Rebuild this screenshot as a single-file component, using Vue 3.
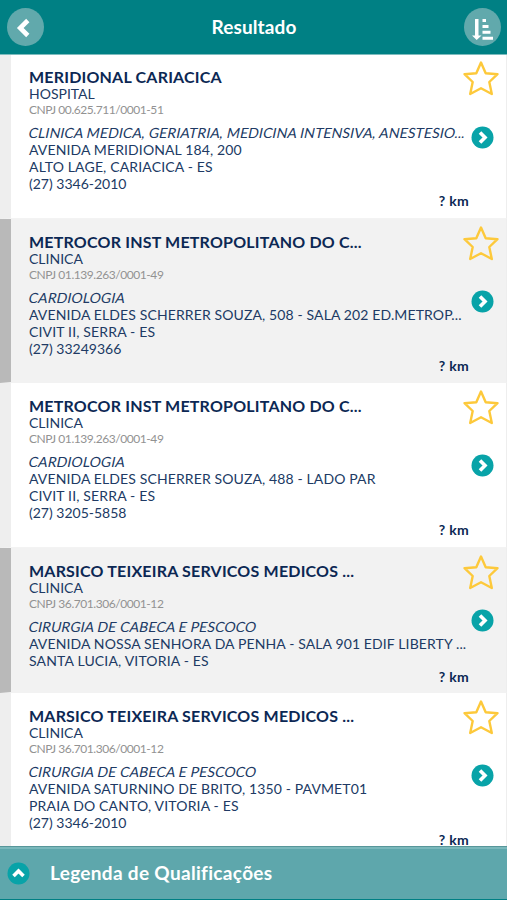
<script setup>
import { ref } from "vue";

// Prestadores encontrados na busca
const results = ref([
  {
    id: 1,
    name: "MERIDIONAL CARIACICA",
    type: "HOSPITAL",
    cnpj: "00.625.711/0001-51",
    specialty: "CLINICA MEDICA, GERIATRIA, MEDICINA INTENSIVA, ANESTESIO...",
    address: "AVENIDA MERIDIONAL 184, 200",
    city: "ALTO LAGE, CARIACICA - ES",
    phone: "(27) 3346-2010",
  },
  {
    id: 2,
    name: "METROCOR INST METROPOLITANO DO C...",
    type: "CLINICA",
    cnpj: "01.139.263/0001-49",
    specialty: "CARDIOLOGIA",
    address: "AVENIDA ELDES SCHERRER SOUZA, 508 - SALA 202 ED.METROP...",
    city: "CIVIT II, SERRA - ES",
    phone: "(27) 33249366",
  },
  {
    id: 3,
    name: "METROCOR INST METROPOLITANO DO C...",
    type: "CLINICA",
    cnpj: "01.139.263/0001-49",
    specialty: "CARDIOLOGIA",
    address: "AVENIDA ELDES SCHERRER SOUZA, 488 - LADO PAR",
    city: "CIVIT II, SERRA - ES",
    phone: "(27) 3205-5858",
  },
  {
    id: 4,
    name: "MARSICO TEIXEIRA SERVICOS MEDICOS ...",
    type: "CLINICA",
    cnpj: "36.701.306/0001-12",
    specialty: "CIRURGIA DE CABECA E PESCOCO",
    address: "AVENIDA NOSSA SENHORA DA PENHA - SALA 901 EDIF LIBERTY ...",
    city: "SANTA LUCIA, VITORIA - ES",
    phone: "",
  },
  {
    id: 5,
    name: "MARSICO TEIXEIRA SERVICOS MEDICOS ...",
    type: "CLINICA",
    cnpj: "36.701.306/0001-12",
    specialty: "CIRURGIA DE CABECA E PESCOCO",
    address: "AVENIDA SATURNINO DE BRITO, 1350 - PAVMET01",
    city: "PRAIA DO CANTO, VITORIA - ES",
    phone: "(27) 3346-2010",
  },
]);
</script>

<template>
  <div class="screen">
    <header class="header">
      <button class="round">
        <svg width="37" height="38" viewBox="0 0 37 38">
          <path d="M20.800 12.500 L13.200 20 L20.800 27.500" fill="none" stroke="#fff" stroke-width="4.600" />
        </svg>
      </button>
      <h1>Resultado</h1>
      <button class="round">
        <svg width="37" height="38" viewBox="0 0 37 38" fill="#fff">
          <path d="M11 11h3.500v16.500h3L12.700 32 8 27.500h3z" />
          <path d="M18.500 11h3.500v3h-3.500zM18.500 17h6v3h-6zM18.500 22.800h8v3h-8zM18.500 28.800h10.500v3h-10.500z" />
        </svg>
      </button>
    </header>

    <main class="list">
      <article v-for="item in results" :key="item.id" class="card">
        <div class="info">
          <h2>{{ item.name }}</h2>
          <p>{{ item.type }}</p>
          <p class="cnpj">CNPJ {{ item.cnpj }}</p>
          <p class="specialty">{{ item.specialty }}</p>
          <p class="address">{{ item.address }}</p>
          <p class="city">{{ item.city }}</p>
          <p v-if="item.phone" class="phone">{{ item.phone }}</p>
          <p class="distance">? km</p>
        </div>
        <div class="actions">
          <svg class="star" width="38" height="36" viewBox="0 0 38 36">
            <path
              d="M19 2.500 L23.700 13.300 L35.500 14.200 L27.300 22 L29.800 34 L19 28.300 L8.200 34 L10.700 22 L2.500 14.200 L14.300 13.300 Z"
              fill="none" stroke="#fdc93b" stroke-width="2.400" stroke-linejoin="round" />
          </svg>
          <svg class="go" width="23" height="23" viewBox="0 0 23 23">
            <circle cx="11.500" cy="11.500" r="11" fill="#08a3a8" />
            <path d="M9 6.500 L14 11.500 L9 16.500" fill="none" stroke="#fff" stroke-width="3.600" />
          </svg>
        </div>
      </article>
    </main>

    <footer class="legend">
      <svg width="23" height="23" viewBox="0 0 23 23">
        <circle cx="11.500" cy="11.500" r="11" fill="#08a3a8" />
        <path d="M6.500 14 L11.500 9 L16.500 14" fill="none" stroke="#fff" stroke-width="3.600" />
      </svg>
      <span>Legenda de Qualificações</span>
    </footer>
  </div>
</template>

<style>
body {
  margin: 0;
}
</style>

<style scoped>
.screen {
  display: flex;
  flex-direction: column;
  height: 900px;
  overflow: hidden;
  background: #eee;
  font-family: Lato, "Liberation Sans", sans-serif;
  color: #203a64;
}

.header {
  display: flex;
  align-items: center;
  justify-content: space-between;
  flex: none;
  height: 55px;
  box-sizing: border-box;
  padding: 0 6px 1px 7px;
  background: #008084;
  border-bottom: 1px solid #7dbcbe;
  color: #fff;
}

.header h1 {
  margin: 0 0 1px;
  font-size: 19px;
  font-weight: 700;
  letter-spacing: 0.1px;
}

.round {
  width: 37px;
  height: 38px;
  padding: 0;
  border: none;
  border-radius: 50%;
  background: #61a9ac;
}

.round svg {
  display: block;
}

.list {
  flex: 1;
  min-height: 0;
  overflow: hidden;
}

.card {
  display: flex;
  height: 164.500px;
  box-sizing: border-box;
  border-left: 11px solid #eee;
  border-right: 1px solid #eee;
  border-bottom: 1px solid #f3f3f3;
  padding-left: 18px;
  background: #fff;
}

.card:first-child {
  margin-top: -0.700px;
}

.card:nth-child(4) {
  height: 145.600px;
}

.card:nth-child(even) {
  border-left-color: #b9b9b9;
  border-bottom-color: #f2f2f2;
  background: #f2f2f2;
}

.info {
  flex: 1;
  min-width: 0;
  display: flex;
  flex-direction: column;
  padding-top: 14px;
  white-space: nowrap;
}

.info h2 {
  margin: 0;
  font-size: 16px;
  line-height: 18px;
  font-weight: 700;
  letter-spacing: 0.200px;
  color: #0c2854;
}

.info p {
  margin: 0;
  font-size: 14px;
  line-height: 17px;
}

.info h2 + p {
  margin-top: -1px;
}

.info .cnpj {
  font-size: 12px;
  line-height: 16px;
  letter-spacing: -0.440px;
  color: #929292;
}

/* inclinado sem trocar o desenho das letras */
.info .specialty {
  margin-top: 6px;
  letter-spacing: 0.120px;
  transform: skewX(-12deg);
}

.info .address {
  letter-spacing: 0.120px;
}

.info .city {
  letter-spacing: 0.160px;
}

.info .distance {
  align-self: flex-end;
  font-weight: 700;
  letter-spacing: 0.300px;
  color: #0c2854;
}

.card:nth-child(4) .distance {
  margin-top: -1px;
}

.actions {
  display: flex;
  flex-direction: column;
  flex: none;
  width: 37px;
  position: relative;
}

.star {
  margin: 6px 0 0 -7px;
}

.go {
  position: absolute;
  left: 2px;
  top: calc(50% - 11px);
}

.card:first-child .go {
  top: calc(50% - 10px);
}

.legend {
  display: flex;
  align-items: center;
  flex: none;
  gap: 20px;
  height: 54px;
  box-sizing: border-box;
  padding-left: 7px;
  border-top: 1px solid #57969a;
  border-bottom: 1px solid #008084;
  box-shadow: inset 0 2px 0 #7ab8bb;
  background: #5ea7ac;
  color: #fff;
  font-size: 19px;
  font-weight: 700;
  letter-spacing: 0.320px;
}

.legend span {
  margin-top: -1px;
}
</style>
